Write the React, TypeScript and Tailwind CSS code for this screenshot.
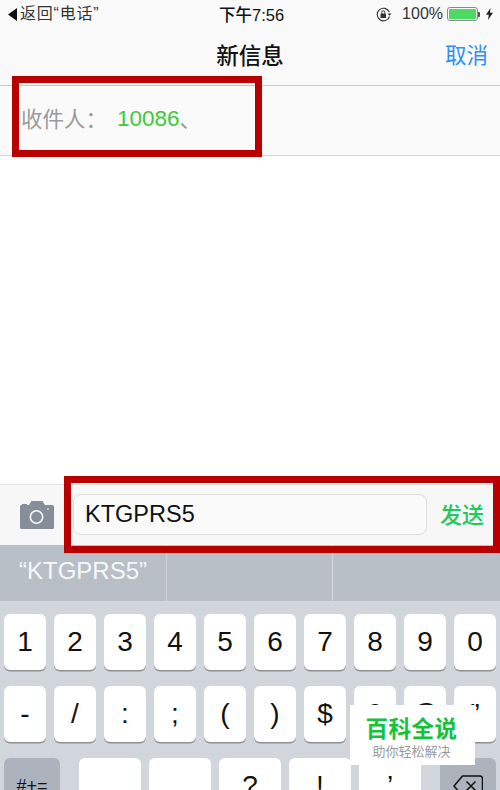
const row1 = ['1', '2', '3', '4', '5', '6', '7', '8', '9', '0'];
const row2 = ['-', '/', ':', ';', '(', ')', '$', '&', '@', '”'];
const row3 = ['.', ',', '?', '!', '’'];

function Key({ label }: { label: string }) {
  return (
    <div className="w-[42px] h-[56px] bg-white rounded-[6px] shadow-[0_1.5px_0_#8e9094] flex items-center justify-center text-[28px] text-[#111]">
      {label}
    </div>
  );
}

function CameraIcon() {
  return (
    <svg width="34" height="28" viewBox="0 0 34 28">
      <path d="M2 3h5v2H2Z" fill="#858e99" />
      <path
        fillRule="evenodd"
        fill="#858e99"
        d="M1.500 4H9L11.500 0H22.500L25 4H32.500A1.500 1.500 0 0 1 34 5.500V26.500A1.500 1.500 0 0 1 32.500 28H1.500A1.500 1.500 0 0 1 0 26.500V5.500A1.500 1.500 0 0 1 1.500 4ZM16.500 9a7 7 0 1 0 0 14a7 7 0 0 0 0-14Zm0 1.600a5.400 5.400 0 1 1 0 10.800a5.400 5.400 0 0 1 0-10.800Z"
      />
      <circle cx="28" cy="8" r="0.900" fill="#d5d8dc" />
    </svg>
  );
}

function RotationLock() {
  return (
    <svg width="17" height="15" viewBox="0 0 17 15" fill="none">
      <path d="M13.500 9.500A6.300 6.300 0 1 1 13.300 5" stroke="#333" strokeWidth="1.100" />
      <path d="M11.500 6.500h4l-2 2.300Z" fill="#333" />
      <rect x="4.500" y="6.500" width="5.500" height="4.500" rx="0.600" fill="#333" />
      <path d="M5.700 6.500V5.300a1.550 1.550 0 0 1 3.100 0V6.500" stroke="#333" strokeWidth="1" />
    </svg>
  );
}

function Battery() {
  return (
    <div className="flex items-center">
      <div className="w-[31px] h-[14px] border border-[#8a8a8a] rounded-[3px] p-px">
        <div className="w-full h-full bg-[#4cd964] rounded-[1px]" />
      </div>
      <div className="w-[2px] h-[5px] bg-[#555] rounded-r-[1px]" />
    </div>
  );
}

function Bolt() {
  return (
    <svg width="7" height="12" viewBox="0 0 7 12">
      <path d="M4.500 0 0 6.800h2.800L2 12l5-7.200H4Z" fill="#222" />
    </svg>
  );
}

function DeleteIcon() {
  return (
    <svg width="30" height="22" viewBox="0 0 30 22" fill="none" stroke="#111" strokeWidth="1.500">
      <path d="M9.500 1h17.500a2.500 2.500 0 0 1 2.500 2.500v15a2.500 2.500 0 0 1-2.500 2.500H9.500L1 11Z" strokeLinejoin="round" />
      <path d="M13.500 6.500l9 9M22.500 6.500l-9 9" />
    </svg>
  );
}

export default function App() {
  return (
    <div
      className="relative w-[500px] h-[790px] overflow-hidden bg-white flex flex-col"
      style={{ fontFamily: '"Liberation Sans", "Noto Sans CJK SC", sans-serif' }}
    >
      {/* status + nav */}
      <div className="h-[86px] bg-[#f9f9f9] border-b border-[#c8c8c8] shrink-0">
        <div className="h-[28px] relative flex items-center justify-between pl-[8px] pr-[7px] text-[#222]">
          <div className="flex items-center text-[16px] tracking-[0.8px] gap-[3px] text-[#333]">
            <svg width="9" height="13" viewBox="0 0 9 13">
              <path d="M9 0v13L0 6.500Z" fill="#111" />
            </svg>
            <span>返回“电话”</span>
          </div>
          <div className="flex items-center text-[16px]">
            <RotationLock />
            <span className="ml-[9px] mr-[4px] text-[#333]">100%</span>
            <Battery />
            <span className="ml-[6px]">
              <Bolt />
            </span>
          </div>
          <span className="absolute left-[219px] top-[3px] text-[16.500px] font-medium text-[#111]">下午7:56</span>
        </div>
        <div className="h-[57px] relative flex items-center justify-center">
          <span className="text-[22.500px] font-medium text-[#111]">新信息</span>
          <span className="absolute right-[12px] text-[21.500px] text-[#2f8ffb]">取消</span>
        </div>
      </div>

      {/* recipient */}
      <div className="h-[70px] bg-[#fafafa] border-b border-[#d8d8d8] shrink-0 flex items-center pl-[21px] text-[21.500px]">
        <span className="text-[#9a9a9a] w-[96px]">收件人：</span>
        <span className="text-[#3ec93a] text-[22.500px] mt-[-3px]">10086</span>
        <span className="text-[#8aa08a]">、</span>
      </div>

      <div className="flex-1 bg-white" />

      {/* composer */}
      <div className="h-[61px] bg-[#f7f7f7] border-t border-[#e2e2e2] shrink-0 flex items-center pl-[20px]">
        <CameraIcon />
        <div className="ml-[19px] w-[354px] h-[41px] mt-[-1px] bg-[#fafafa] border border-[#dedede] rounded-[8px] flex items-center pl-[11px] pt-[1px] text-[23.500px] text-[#111]">
          KTGPRS5
        </div>
        <span className="ml-[13px] text-[22px] font-medium text-[#21c95a]">发送</span>
      </div>

      {/* suggestions */}
      <div className="h-[56px] bg-[#b8bfc7] shrink-0 grid grid-cols-3 divide-x divide-[#d3d8de] text-white text-[24px]">
        <div className="h-[56px] pl-[19px] pt-[8px] font-light opacity-90">“KTGPRS5”</div>
        <div />
        <div />
      </div>

      {/* keyboard */}
      <div className="h-[189px] bg-[#d1d5dc] shrink-0 flex flex-col gap-[16px] pt-[13px] px-[4px]">
        <div className="flex gap-[8px]">
          {row1.map((k) => (
            <Key key={k} label={k} />
          ))}
        </div>
        <div className="flex gap-[8px]">
          {row2.map((k) => (
            <Key key={k} label={k} />
          ))}
        </div>
        <div className="flex justify-between">
          <div className="w-[56px] h-[56px] bg-[#acb3bd] rounded-[6px] flex items-center justify-center text-[18px] text-[#111]">
            #+=
          </div>
          <div className="flex gap-[8px]">
            {row3.map((k) => (
              <div
                key={k}
                className="w-[62px] h-[56px] bg-white rounded-[6px] flex items-center justify-center text-[28px] text-[#111]"
              >
                {k}
              </div>
            ))}
          </div>
          <div className="w-[56px] h-[56px] bg-[#acb3bd] rounded-[6px] flex items-center justify-center">
            <DeleteIcon />
          </div>
        </div>
      </div>

      {/* annotation boxes */}
      <div className="absolute left-[12px] top-[76px] w-[250px] h-[81px] border-[7px] border-[#b90000]" />
      <div className="absolute left-[64px] top-[476px] w-[436px] h-[77px] border-[7px] border-[#b90000]" />

      {/* watermark */}
      <div className="absolute left-[350px] top-[705px] w-[125px] h-[60px] bg-white flex flex-col items-center pt-[11px] pr-[2px]">
        <span className="text-[22.500px] leading-[27px] font-bold text-[#12c33a] tracking-[0.5px]">百科全说</span>
        <span className="text-[13px] leading-[18px] text-[#9a9a9a]">助你轻松解决</span>
      </div>
    </div>
  );
}
